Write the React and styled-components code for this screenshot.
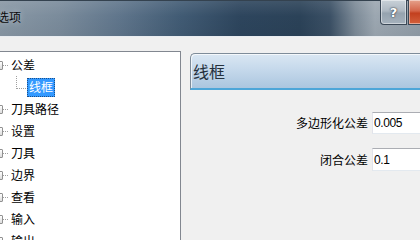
import React from "react";
import styled, { createGlobalStyle } from "styled-components";

const Global = createGlobalStyle`
  html, body {
    margin: 0;
    padding: 0;
    width: 420px;
    height: 240px;
    overflow: hidden;
    background: #f0f0f0;
  }
  * { box-sizing: border-box; }
`;

const Window = styled.div`
  width: 474px;
  height: 240px;
  margin-left: -14px;
  display: flex;
  flex-direction: column;
  background: #f0f0f0;
  font-family: "Noto Sans CJK SC", "Noto Sans", sans-serif;
`;

const TitleBar = styled.div`
  height: 37px;
  flex: none;
  display: flex;
  align-items: flex-start;
  padding-left: 11px;
  border-bottom: 1px solid #e9edf1;
  box-shadow: inset 0 1px 0 #34424f;
  background:
    linear-gradient(180deg, rgba(255,255,255,0.10) 0%, rgba(255,255,255,0) 45%, rgba(0,0,0,0.04) 100%),
    linear-gradient(90deg,
      #8c9aa7 0px,
      #7a8b9b 74px,
      #5f758b 134px,
      #415b74 194px,
      #2d455d 254px,
      #2b4258 314px,
      #3b5065 344px,
      #7c8a97 369px,
      #9ca7b1 389px,
      #8f9ba6 440px);
`;

const TitleText = styled.span`
  margin-top: 10px;
  font-size: 12px;
  line-height: 13px;
  color: #0a0a0a;
  text-shadow: 0 0 6px rgba(230, 236, 242, 0.55);
`;

const Controls = styled.div`
  margin-left: auto;
  margin-right: 5px;
  display: flex;
  gap: 1px;
  height: 25px;
`;

const CtrlButton = styled.div`
  height: 25px;
  width: ${(p) => p.$w}px;
  display: flex;
  align-items: center;
  justify-content: center;
  border: 1px solid #3b4856;
  border-top: none;
  border-radius: ${(p) => (p.$close ? "0 0 4px 0" : "0 0 0 4px")};
  box-shadow: inset 0 0 0 1px rgba(255, 255, 255, 0.45);
  background: ${(p) =>
    p.$close
      ? "linear-gradient(180deg, #e6a28c 0%, #d4664a 45%, #c3401f 55%, #d2603c 100%)"
      : "linear-gradient(180deg, #c9d1d8 0%, #aeb8c2 45%, #96a3af 55%, #a5b1bc 100%)"};
  font-family: "DejaVu Sans", sans-serif;
  font-weight: bold;
  font-size: 13px;
  color: #ffffff;
  text-shadow: 0 0 2px #2a3440, 0 0 1px #2a3440;
`;

const Content = styled.div`
  flex: 1;
  display: flex;
  gap: 9px;
  padding: 14px 0 0 7px;
  min-height: 0;
`;

const Tree = styled.div`
  width: 188px;
  height: 260px;
  flex: none;
  background: #ffffff;
  border: 1px solid #828790;
  padding-top: 2px;
  display: flex;
  flex-direction: column;
`;

const Row = styled.div`
  height: 22px;
  display: flex;
  align-items: center;
  padding-left: ${(p) => p.$indent}px;
`;

const Expander = styled.span`
  width: 9px;
  height: 9px;
  flex: none;
  border: 1px solid #919191;
  border-radius: 1px;
  background: linear-gradient(180deg, #ffffff, #dcdcdc);
`;

const HLine = styled.span`
  width: 5px;
  height: 0;
  flex: none;
  border-top: 1px dotted #a0a0a0;
`;

const Connector = styled.span`
  width: 10px;
  height: 22px;
  flex: none;
  align-self: flex-start;
  display: flex;
  flex-direction: column;
  &::before {
    content: "";
    display: block;
    height: 12px;
    border-left: 1px dotted #a0a0a0;
    border-bottom: 1px dotted #a0a0a0;
  }
`;

const Label = styled.span`
  margin-left: 1px;
  height: 19px;
  display: flex;
  align-items: center;
  padding: 0 1px;
  font-size: 12px;
  line-height: 1;
  color: ${(p) => (p.$selected ? "#ffffff" : "#000000")};
  background: ${(p) => (p.$selected ? "#3399ff" : "transparent")};
  border: 1px dotted ${(p) => (p.$selected ? "#1b4f8a" : "transparent")};
`;

const Panel = styled.div`
  flex: 1;
  display: flex;
  flex-direction: column;
  padding-top: 2px;
`;

const Header = styled.div`
  height: 37px;
  flex: none;
  display: flex;
  align-items: center;
  padding-left: 2px;
  border-top: 1px solid #7e8c99;
  border-left: 1px solid #7e8c99;
  border-bottom: 2px solid #4da6d8;
  border-radius: 5px 0 0 0;
  box-shadow: inset 1px 1px 0 rgba(255, 255, 255, 0.7);
  background: linear-gradient(180deg, #dae7f3 0%, #c3d7ea 50%, #abc6df 100%);
  font-size: 16px;
  line-height: 1;
  color: #25313c;
`;

const Form = styled.div`
  display: grid;
  grid-template-columns: 1fr 88px;
  grid-template-rows: 22px 23px;
  column-gap: 4px;
  row-gap: 14px;
  padding-top: 22px;
`;

const FieldLabel = styled.span`
  justify-self: end;
  align-self: center;
  font-size: 12px;
  line-height: 1;
  color: #000000;
`;

const Field = styled.input`
  width: 100%;
  height: 100%;
  margin: 0;
  padding: 0 0 0 1px;
  border: 1px solid #e3e9ef;
  border-top-color: #abadb3;
  border-left-color: #e2e3ea;
  background: #ffffff;
  outline: none;
  font-family: "Liberation Sans", Arial, sans-serif;
  font-size: 12px;
  letter-spacing: -0.4px;
  color: #000000;
`;

const items = [
  { text: "公差", level: 0 },
  { text: "线框", level: 1, selected: true },
  { text: "刀具路径", level: 0 },
  { text: "设置", level: 0 },
  { text: "刀具", level: 0 },
  { text: "边界", level: 0 },
  { text: "查看", level: 0 },
  { text: "输入", level: 0 },
  { text: "输出", level: 0 },
];

export default function App() {
  return (
    <>
      <Global />
      <Window>
        <TitleBar>
          <TitleText>选项</TitleText>
          <Controls>
            <CtrlButton $w={27}>?</CtrlButton>
            <CtrlButton $w={47} $close>
              ✕
            </CtrlButton>
          </Controls>
        </TitleBar>
        <Content>
          <Tree>
            {items.map((it) =>
              it.level === 0 ? (
                <Row key={it.text} $indent={0}>
                  <Expander />
                  <HLine />
                  <Label>{it.text}</Label>
                </Row>
              ) : (
                <Row key={it.text} $indent={22}>
                  <Connector />
                  <Label $selected={it.selected}>{it.text}</Label>
                </Row>
              )
            )}
          </Tree>
          <Panel>
            <Header>线框</Header>
            <Form>
              <FieldLabel>多边形化公差</FieldLabel>
              <Field defaultValue="0.005" readOnly />
              <FieldLabel>闭合公差</FieldLabel>
              <Field defaultValue="0.1" readOnly />
            </Form>
          </Panel>
        </Content>
      </Window>
    </>
  );
}
